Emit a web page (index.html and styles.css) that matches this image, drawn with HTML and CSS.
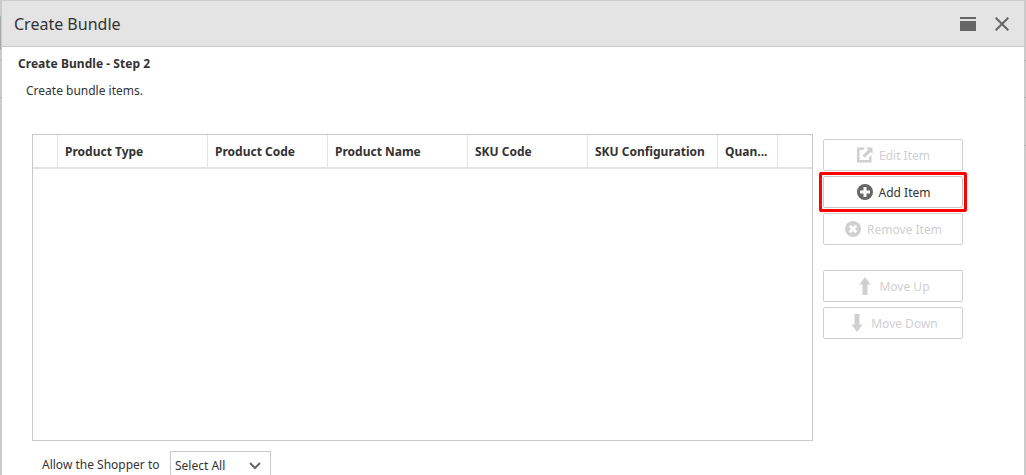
FILE: index.html
```html
<!DOCTYPE html>
<html lang="en">
<head>
<meta charset="utf-8">
<title>Create Bundle</title>
<link rel="stylesheet" href="styles.css">
</head>
<body>
<section class="dialog">
  <header class="titlebar">
    <h1 class="title">Create Bundle</h1>
    <svg class="window-icon" width="16" height="14" viewBox="0 0 16 14"><path d="M0 0h16v2H0zM0 4h16v10H0z"/></svg>
    <svg class="close-icon" width="14" height="14" viewBox="0 0 14 14"><path d="M.7.7l12.6 12.6M13.3.7L.7 13.3"/></svg>
  </header>
  <main class="content">
    <h2 class="step">Create Bundle - Step 2</h2>
    <p class="hint">Create bundle items.</p>
    <div class="workspace">
      <div class="grid">
        <div class="grid-head">
          <div class="cell"></div>
          <div class="cell"><span>Product Type</span></div>
          <div class="cell"><span>Product Code</span></div>
          <div class="cell"><span>Product Name</span></div>
          <div class="cell"><span>SKU Code</span></div>
          <div class="cell"><span>SKU Configuration</span></div>
          <div class="cell"><span>Quan...</span></div>
        </div>
      </div>
      <div class="actions">
        <button class="btn" disabled>
          <svg width="16" height="16" viewBox="0 0 16 16"><path d="M0 .5h8L6 3H2.500v10H12V10l2.500-2v7.500H0zM9 .5h6.500V7l-2-2-5.800 5.800-2.200-2.200L11.200 2.700z"/></svg>
          <span>Edit Item</span>
        </button>
        <button class="btn highlighted">
          <svg width="16" height="16" viewBox="0 0 16 16"><circle cx="8" cy="8" r="8"/><path class="mark" d="M6.500 3h3v3.500H13v3H9.500V13h-3V9.500H3v-3h3.500z"/></svg>
          <span>Add Item</span>
        </button>
        <button class="btn" disabled>
          <svg width="16" height="16" viewBox="0 0 16 16"><circle cx="8" cy="8" r="8"/><path class="cross" d="M4.700 4.700l6.600 6.600M11.300 4.700l-6.600 6.600"/></svg>
          <span>Remove Item</span>
        </button>
        <button class="btn move-up" disabled>
          <svg width="16" height="18" viewBox="0 0 16 18"><path d="M8 0l5.500 7.500h-3V18h-5V7.500h-3z"/></svg>
          <span>Move Up</span>
        </button>
        <button class="btn" disabled>
          <svg width="16" height="18" viewBox="0 0 16 18"><path d="M8 18l5.500-7.500h-3V0h-5v10.500h-3z"/></svg>
          <span>Move Down</span>
        </button>
      </div>
    </div>
    <div class="selection">
      <span class="selection-label">Allow the Shopper to</span>
      <div class="select"><span>Select All</span>
        <svg width="12" height="8" viewBox="0 0 12 8"><path d="M1 1l5 5 5-5"/></svg>
      </div>
    </div>
  </main>
</section>
</body>
</html>
```
FILE: styles.css
```css
* { box-sizing: border-box; }
body {
  margin: 0;
  height: 475px;
  overflow: hidden;
  padding: 1px 2px 0;
  /* slivers of the dimmed page visible beside the dialog */
  background:
    linear-gradient(#a8a8a8, #a8a8a8) 0 16px / 1px 34px no-repeat,
    linear-gradient(#a8a8a8, #a8a8a8) 0 60px / 1px 1px no-repeat,
    linear-gradient(#a8a8a8, #a8a8a8) 0 97px / 1px 1px no-repeat,
    linear-gradient(#a8a8a8, #a8a8a8) 100% 60px / 1px 1px no-repeat,
    linear-gradient(#a8a8a8, #a8a8a8) 100% 97px / 1px 1px no-repeat,
    linear-gradient(#a8a8a8, #a8a8a8) 100% 145px / 1px 1px no-repeat,
    #cbcbcb;
  font: 12px/18px "Noto Sans", sans-serif;
  color: #333;
}
h1, h2, p { margin: 0; }
.dialog { height: 474px; overflow: hidden; background: #fff; }
.titlebar {
  display: flex;
  align-items: center;
  height: 46px;
  padding: 0 15px 0 12px;
  background: #e4e4e4;
  border-bottom: 1px solid #c8c8c8;
}
.title { flex: 1; font-size: 16px; line-height: 24px; font-weight: 400; }
.window-icon { fill: #666; margin-right: 19px; }
.close-icon { fill: none; stroke: #666; stroke-width: 2; }
.content { padding: 8px 0 0 16px; }
.step { font-size: 12px; line-height: 18px; font-weight: 700; letter-spacing: 0.04px; }
.hint { padding: 9px 0 0 8px; }
.workspace { display: flex; padding: 34px 0 0 14px; }
.grid { width: 781px; height: 307px; border: 1px solid #c8c8c8; }
.grid-head {
  display: grid;
  grid-template-columns: 25px 150px 120px 140px 120px 130px 60px;
  height: 34px;
  border-bottom: 2px solid #e4e4e4;
}
.cell {
  min-width: 0;
  padding: 8px 7px 0;
  border-right: 1px solid #e4e4e4;
  font-weight: 700;
}
.cell span {
  display: block;
  height: 16px;
  line-height: 18px;
  overflow: hidden;
  text-overflow: ellipsis;
  white-space: nowrap;
}
.actions { display: flex; flex-direction: column; gap: 5px; padding: 5px 0 0 10px; }
.btn {
  display: flex;
  align-items: center;
  justify-content: center;
  gap: 6px;
  width: 140px;
  height: 32px;
  padding: 0 0 0 1px;
  border: 1px solid #c8c8c8;
  border-radius: 2px;
  background: #fff;
  font: inherit;
  color: #333;
}
.btn span { padding-top: 2px; }
.btn svg { fill: #666; }
.btn:disabled { color: #d0d0d0; border-color: #d0d0d0; }
.btn:disabled svg { fill: #d0d0d0; }
.btn .mark { fill: #fff; }
.btn .cross { stroke: #fff; stroke-width: 2.800; }
.highlighted { position: relative; }
.highlighted::after {
  content: "";
  position: absolute;
  inset: -5px;
  border: 3px solid #f00;
  border-radius: 2px;
}
.move-up { margin-top: 20px; }
.selection { display: flex; padding: 10px 0 0 24px; }
.selection-label { width: 128px; padding-top: 5px; }
.select {
  display: flex;
  align-items: center;
  justify-content: space-between;
  width: 101px;
  height: 30px;
  padding: 0 9px 0 4px;
  border: 1px solid #c8c8c8;
}
.select svg { fill: none; stroke: #666; stroke-width: 2; }
```
